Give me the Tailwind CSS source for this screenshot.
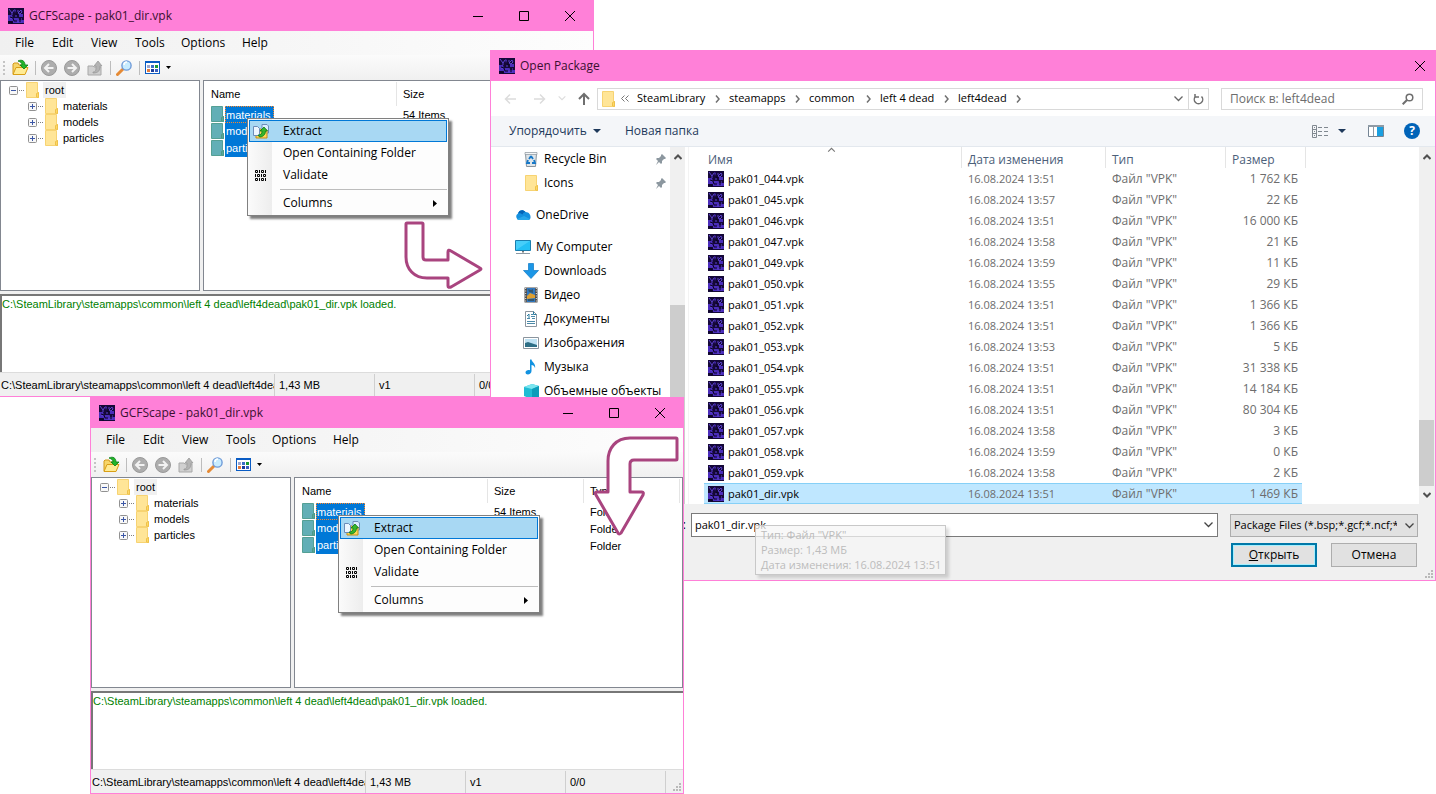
<!DOCTYPE html>
<html lang="ru">
<head>
    <meta charset="UTF-8" />
    <meta name="viewport" content="width=device-width, initial-scale=1" />
    <title>GCFScape - pak01_dir.vpk</title>
    <script src="https://cdn.jsdelivr.net/npm/@tailwindcss/browser@4"></script>
</head>
<body class="bg-white text-black text-xs font-['Open_Sans','Noto_Sans',sans-serif]">
    <!-- Shared icons -->
    <svg class="hidden" aria-hidden="true">
        <symbol id="i-app" viewBox="0 0 16 16">
            <rect width="16" height="16" fill="#150838" />
            <path d="M0 7h4l1 3h5l1 2h5v3H5v-2H0zM6 1l2 1-1 3zM11 6h4v3h-4z" fill="#4a2cba" />
            <path d="M1 1l3 4 2-3M4 5v2M9 3h2M13 2l1 2-2 2-2-1zM7 8h2M2 10l2 1M10 11h1M13 11h1M9 14h2M13 14h1" fill="none" stroke="#5c43cf" />
            <path d="M2 9l3 1 1 3h3M12 12v2M8 6l2 1M0 14h4v2" fill="none" stroke="#0a0320" />
        </symbol>
        <symbol id="i-folder" viewBox="0 0 13 16">
            <path d="M.5.5h11v10h1v5H.5z" fill="#ffe597" stroke="#f7d372" />
            <path d="M10.500 15V11.500l2-1v5z" fill="#ffd968" stroke="#eec14a" />
        </symbol>
        <symbol id="i-folder-sel" viewBox="0 0 13 16">
            <path d="M.5.5h11v10h1v5H.5z" fill="#62afb6" stroke="#54a094" />
            <path d="M10.500 15V11.500l2-1v5z" fill="#5aa79c" stroke="#4d9a86" />
        </symbol>
        <symbol id="i-min" viewBox="0 0 10 10"><path d="M0 5.500h10" stroke="#000" /></symbol>
        <symbol id="i-max" viewBox="0 0 10 10"><path d="M.5.5h9v9h-9z" fill="none" stroke="#000" /></symbol>
        <symbol id="i-close" viewBox="0 0 10 10"><path d="M0 0l10 10M10 0L0 10" stroke="#000" /></symbol>
        <symbol id="i-open" viewBox="0 0 17 17">
            <path d="M1 5l1-1h4l1 2h6v9H1z" fill="#f7d66a" stroke="#d39a1c" />
            <path d="M1 15.500l3-7h12l-3 7z" fill="#ffeb94" stroke="#d99f16" />
            <path d="M6 2c4-2 7 0 7 4h3l-4 4-4-4h2c0-2-1-3-4-4z" fill="#22b52a" stroke="#087d14" stroke-width=".8" />
        </symbol>
        <symbol id="i-back" viewBox="0 0 16 16">
            <circle cx="8" cy="8" r="7.500" fill="#adadad" stroke="#999" />
            <path d="M12.500 8H4.500M8 4L4 8l4 4" fill="none" stroke="#f2f2f2" stroke-width="2" />
        </symbol>
        <symbol id="i-fwd" viewBox="0 0 16 16">
            <circle cx="8" cy="8" r="7.500" fill="#adadad" stroke="#999" />
            <path d="M3.500 8h8M8 4l4 4-4 4" fill="none" stroke="#f2f2f2" stroke-width="2" />
        </symbol>
        <symbol id="i-up" viewBox="0 0 16 16">
            <path d="M1 6h5l1 1h7v8H1z" fill="#d0d0d0" stroke="#a8a8a8" />
            <path d="M6 12c3 0 3-2 3-6H7l4-5 4 5h-2c0 5-2 7-7 7z" fill="#b4b4b4" stroke="#999" stroke-width=".8" />
        </symbol>
        <symbol id="i-find" viewBox="0 0 16 16">
            <path d="M1.500 14.500l5-5" stroke="#e58a35" stroke-width="3" stroke-linecap="round" />
            <circle cx="10.500" cy="5.500" r="4.600" fill="#c8ecff" stroke="#6f9bd8" stroke-width="1.400" />
            <path d="M8 5c0-2 1-3 3-3" fill="none" stroke="#fff" stroke-width="1.500" />
        </symbol>
        <symbol id="i-view" viewBox="0 0 15 13">
            <rect x=".5" y=".5" width="14" height="12" fill="#fff" stroke="#0a5cc4" />
            <rect width="15" height="2" fill="#0a5cc4" />
            <path d="M2 4h3v3H2z" fill="#9aa5cf" /><path d="M6 4h3v3H6z" fill="#3c6fc8" /><path d="M10 4h3v3h-3z" fill="#199a34" />
            <path d="M2 8h3v3H2z" fill="#e47a3c" /><path d="M6 8h3v3H6z" fill="#183c9c" /><path d="M10 8h3v3h-3z" fill="#3a5fc0" />
        </symbol>
        <symbol id="i-extract" viewBox="0 0 16 15">
            <path d="M9 .5h5l1.500 1.500v7H9z" fill="#dceeff" stroke="#6c8cb8" />
            <path d="M3 5h5l1 1h5v8H3z" fill="#ffd85a" stroke="#c58c12" />
            <path d="M.5 2.500h4l2 2v7h-6z" fill="#eef6ff" stroke="#6c8cb8" />
            <path d="M5 11c3 0 4-1 4-4H7l4-4 3.500 4h-2c0 4-3 6-6 6z" fill="#35b52c" stroke="#0b7a14" stroke-width=".8" />
        </symbol>
        <symbol id="i-validate" viewBox="0 0 12 11">
            <path d="M.5.5h2v2h-2zM4.500 0v3M6.500.5h2v2h-2zM10.500 0v3M.5 4v3M2.500 4.500h2v2h-2zM6.500 4v3M8.500 4.500h2v2h-2zM.5 8.500h2v2h-2zM4.500 8v3M6.500 8.500h2v2h-2zM10.500 8v3" fill="none" stroke="#000" />
        </symbol>
        <symbol id="i-plus" viewBox="0 0 9 9">
            <rect x=".5" y=".5" width="8" height="8" rx="1" fill="#f8f8f8" stroke="#919191" />
            <path d="M2 4.500h5M4.500 2v5" stroke="#3c57a6" />
        </symbol>
        <symbol id="i-minus" viewBox="0 0 9 9">
            <rect x=".5" y=".5" width="8" height="8" rx="1" fill="#f8f8f8" stroke="#919191" />
            <path d="M2 4.500h5" stroke="#3c57a6" />
        </symbol>
        <symbol id="i-grip" viewBox="0 0 8 8">
            <path d="M6 0h2v2H6zM3 3h2v2H3zM6 3h2v2H6zM0 6h2v2H0zM3 6h2v2H3zM6 6h2v2H6z" fill="#b9b9b9" />
        </symbol>
        <symbol id="i-chev-r" viewBox="0 0 5 8"><path d="M1 .5L4 4 1 7.500" fill="none" stroke="#707070" stroke-width="1.500" /></symbol>
        <symbol id="i-chev-d" viewBox="0 0 9 6"><path d="M.5.5l4 4 4-4" fill="none" stroke="currentColor" stroke-width="1.300" /></symbol>
        <symbol id="i-sb-up" viewBox="0 0 8 6"><path d="M.5 5L4 1.500 7.500 5" fill="none" stroke="#505050" stroke-width="2" /></symbol>
        <symbol id="i-sb-down" viewBox="0 0 8 6"><path d="M.5 1L4 4.500 7.500 1" fill="none" stroke="#505050" stroke-width="2" /></symbol>
        <symbol id="i-pin" viewBox="0 0 10 11"><path d="M6 0l4 4-1 1H8L6 7v2L5 10 3 8l-3 3 2-4-2-2 1-1h2l2-2V1z" fill="#8c979f" /></symbol>
    </svg>

    <main class="relative min-h-screen overflow-hidden">
        <div id="window-back" class="absolute top-0 -left-px w-[595px]"></div>

        <!-- Open dialog -->
        <section class="absolute top-[50px] left-[490px] right-0 flex h-[531px] flex-col border border-[#ff80d8] bg-white" aria-label="Open Package">
            <header class="flex h-[30px] shrink-0 items-center bg-[#ff80d8] pl-2">
                <svg class="size-4"><use href="#i-app" /></svg>
                <h2 class="ml-[5px] text-[#3a1030]">Open Package</h2>
                <button class="ml-auto flex h-full w-[30px] items-center justify-center" aria-label="Закрыть"><svg class="size-[10px]"><use href="#i-close" /></svg></button>
            </header>

            <div class="flex h-[35px] shrink-0 items-center pr-3">
                <div class="flex w-[106px] items-center">
                    <button class="ml-[13px] w-[15px]" aria-label="Назад"><svg class="h-3 w-[13px]" viewBox="0 0 13 12"><path d="M12 6H1.500M6 1.500L1.500 6 6 10.500" fill="none" stroke="#dcdcdc" stroke-width="1.500" /></svg></button>
                    <button class="ml-[14px] w-[13px]" aria-label="Вперёд"><svg class="h-3 w-[13px]" viewBox="0 0 13 12"><path d="M1 6h10.500M7 1.500L11.500 6 7 10.500" fill="none" stroke="#dcdcdc" stroke-width="1.500" /></svg></button>
                    <button class="ml-3 text-[#dcdcdc]" aria-label="Последние расположения"><svg class="h-[5px] w-2"><use href="#i-chev-d" /></svg></button>
                    <button class="ml-3" aria-label="Вверх"><svg class="h-[13px] w-3" viewBox="0 0 12 13"><path d="M6 13V2M1 7l5-5 5 5" fill="none" stroke="#6f6f6f" stroke-width="2" /></svg></button>
                </div>
                <nav class="flex h-[22px] flex-1 items-center border border-[#d9d9d9] pl-1 text-[11px]" aria-label="Путь">
                    <svg class="h-4 w-[13px]"><use href="#i-folder" /></svg>
                    <svg class="ml-[6px] h-[7px] w-2" viewBox="0 0 8 7"><path d="M3.500.5l-3 3 3 3M7.500.5l-3 3 3 3" fill="none" stroke="#777" /></svg>
                    <a href="#" class="ml-2 w-[78px]">SteamLibrary</a><svg class="h-2 w-[5px]"><use href="#i-chev-r" /></svg>
                    <a href="#" class="ml-[9px] w-[66px]">steamapps</a><svg class="h-2 w-[5px]"><use href="#i-chev-r" /></svg>
                    <a href="#" class="ml-[9px] w-[57px]">common</a><svg class="h-2 w-[5px]"><use href="#i-chev-r" /></svg>
                    <a href="#" class="ml-[9px] w-16 whitespace-nowrap">left 4 dead</a><svg class="h-2 w-[5px]"><use href="#i-chev-r" /></svg>
                    <a href="#" class="ml-[9px] w-[58px]">left4dead</a><svg class="h-2 w-[5px]"><use href="#i-chev-r" /></svg>
                    <button class="ml-auto flex h-full w-5 items-center justify-center text-[#666]" aria-label="Предыдущие расположения"><svg class="h-[6px] w-[9px]"><use href="#i-chev-d" /></svg></button>
                    <button class="flex h-full w-5 items-center justify-center border-l border-[#d9d9d9]" aria-label="Обновить">
                        <svg class="h-3 w-[11px]" viewBox="0 0 11 12"><path d="M2.500 3.500a4.200 4.200 0 1 0 6 0M2 1v3h4" fill="none" stroke="#6f6f6f" stroke-width="1.500" /></svg>
                    </button>
                </nav>
                <div class="ml-3 flex h-[22px] w-[202px] items-center border border-[#d9d9d9] px-2">
                    <input type="search" class="min-w-0 flex-1 outline-none placeholder:text-[#6d6d6d]" placeholder="Поиск в: left4dead" aria-label="Поиск" />
                    <svg class="size-3" viewBox="0 0 12 12"><circle cx="7.500" cy="4.500" r="3.300" fill="none" stroke="#6f6f6f" stroke-width="1.500" /><path d="M5 7L.7 11.300" stroke="#6f6f6f" stroke-width="2" /></svg>
                </div>
            </div>

            <div class="flex h-[31px] shrink-0 items-center border-b border-[#e3e8ee] bg-[#f4f6f9] pr-[15px] pl-[18px] text-[#1e395b]">
                <button class="flex w-[116px] items-center gap-[6px]">Упорядочить <svg class="h-1 w-2" viewBox="0 0 8 4"><path d="M0 0h8L4 4z" fill="#1e395b" /></svg></button>
                <button>Новая папка</button>
                <button class="ml-auto flex items-center gap-[10px]" aria-label="Вид">
                    <svg class="h-[13px] w-4" viewBox="0 0 16 13"><path d="M.5.5h4v12h-4zM.5 4.500h4M.5 8.500h4M2 2.500h1M2 6.500h1M2 10.500h1M6 2.500h4M12 2.500h4M6 6.500h4M12 6.500h4M6 10.500h4M12 10.500h4" fill="none" stroke="#808890" /></svg>
                    <svg class="h-1 w-2" viewBox="0 0 8 4"><path d="M0 0h8L4 4z" fill="#1e395b" /></svg>
                </button>
                <button class="ml-[22px]" aria-label="Область просмотра">
                    <svg class="h-3 w-4" viewBox="0 0 16 12"><path d="M.5.5h15v11H.5z" fill="#fff" stroke="#748494" /><path d="M0 0h16v2H0zM5 1h1v10H5z" fill="#8f9ba6" /><path d="M9 2h6v9H9z" fill="#1a9fe0" /></svg>
                </button>
                <button class="ml-5 flex size-4 items-center justify-center rounded-full bg-[#0063b8] text-xs font-bold text-white" aria-label="Справка">?</button>
            </div>

            <div class="flex h-[357px] shrink-0">
                <ul class="flex w-[179px] flex-col overflow-hidden whitespace-nowrap">
                    <li class="flex h-6 shrink-0 items-center pl-8">
                        <svg class="mr-[5px] size-4" viewBox="0 0 16 16"><path d="M2.500 2.500h11l-1 13h-9z" fill="#dfe5e9" stroke="#8a949c" /><path d="M2 1.500h12v2H2z" fill="#f4f6f7" stroke="#8a949c" stroke-width=".7" /><path d="M8 5l2 3M11 9l1 3H9M7 12H4l1-3M6 8l2-3" fill="none" stroke="#1678c8" stroke-width="1.800" /></svg>
                        Recycle Bin <svg class="ml-auto mr-1 h-[11px] w-[10px]"><use href="#i-pin" /></svg>
                    </li>
                    <li class="mb-2 flex h-6 shrink-0 items-center pl-[34px]">
                        <svg class="mr-[6px] h-4 w-[13px]"><use href="#i-folder" /></svg>
                        Icons <svg class="ml-auto mr-1 h-[11px] w-[10px]"><use href="#i-pin" /></svg>
                    </li>
                    <li class="mb-2 flex h-6 shrink-0 items-center pl-6">
                        <svg class="mr-[5px] size-4" viewBox="0 0 16 16"><path d="M4 13a3.500 3.500 0 0 1-1-6.500C4 3 8 2 10.500 5 14 5 16 8 15.500 11c-.5 1.500-1.500 2-2.500 2z" fill="#1490df" /><path d="M3 6.500C4 3 8 2 10.500 5 9 5 8 6 7.500 7.500 6 6.500 5 6 3 6.500z" fill="#0364b8" /><path d="M2 12l7-3 6 3c-.5.7-1.200 1-2 1H4c-.8 0-1.500-.4-2-1z" fill="#28a8ea" /></svg>
                        OneDrive
                    </li>
                    <li class="flex h-6 shrink-0 items-center pl-6">
                        <svg class="mr-[5px] size-4" viewBox="0 0 16 16"><path d="M.5 1.500h15v10H.5z" fill="#23c0f5" stroke="#1b7eae" /><path d="M1 2h14L1 11z" fill="#6adcff" opacity=".5" /><path d="M7 12h2v1.500H7z" fill="#777" /><path d="M1 14.500h14" stroke="#8d9aa5" /></svg>
                        My Computer
                    </li>
                    <li class="flex h-6 shrink-0 items-center pl-8">
                        <svg class="mr-[5px] size-4" viewBox="0 0 16 16"><path d="M5.500.5h5v7h5L8 15.500.5 7.500h5z" fill="#1b96e6" stroke="#0b78c6" stroke-width=".7" /></svg>
                        Downloads
                    </li>
                    <li class="flex h-6 shrink-0 items-center pl-8">
                        <svg class="mr-[5px] size-4" viewBox="0 0 16 16"><path d="M1.500.5h13v15h-13z" fill="#4c4c4c" /><path d="M4 1h8v14H4z" fill="#2f78c0" /><path d="M4 9l3-3 5 2v3l-8 1z" fill="#e0a030" /><path d="M5 2l3 1 2-1v4L6 5zM5 12h6v2H5z" fill="#34566e" /><path d="M2.700 1v15M13.300 1v15" stroke="#eee" stroke-dasharray="1 1.500" /></svg>
                        Видео
                    </li>
                    <li class="flex h-6 shrink-0 items-center pl-8">
                        <svg class="mr-[5px] size-4" viewBox="0 0 16 16"><path d="M2.500.5h8l3 3v12h-11z" fill="#fff" stroke="#8b959e" /><path d="M8 3.500h2M8 5.500h4M4 7.500h3M9 7.500h3M4 10.500h8M4 12.500h8" stroke="#4b89a8" /><path d="M4 5l2-2v4M10.500.5v3h3" fill="none" stroke="#2b7da0" /></svg>
                        Документы
                    </li>
                    <li class="flex h-6 shrink-0 items-center pl-8">
                        <svg class="mr-[5px] size-4" viewBox="0 0 16 16"><path d="M.5 2.500h15v11H.5z" fill="#fff" stroke="#8b959e" /><path d="M2 4h12v8H2z" fill="#bfe2f3" /><path d="M2 8l3-1 9 3v2H2z" fill="#2e6f86" /></svg>
                        Изображения
                    </li>
                    <li class="flex h-6 shrink-0 items-center pl-8">
                        <svg class="mr-[5px] size-4" viewBox="0 0 16 16"><path d="M7 .5h1.500c.5 3 4.500 4 3.500 8.500-.5-2-2-3-3.500-3V12c0 4-6 4.500-6 1.500 0-2 2.500-3 4.500-2.200z" fill="#1292e0" /></svg>
                        Музыка
                    </li>
                    <li class="flex h-6 shrink-0 items-center pl-8">
                        <svg class="mr-[5px] size-4" viewBox="0 0 16 16"><path d="M1 4l8-3 7 2v11l-8 2-7-3z" fill="#20bcd4" /><path d="M1 4l8-3 7 2-7 3z" fill="#7be5ef" /><path d="M9 6l7-3v11l-7 2z" fill="#0c9cba" /></svg>
                        Объемные объекты
                    </li>
                </ul>
                <div class="flex w-[15px] flex-col items-center bg-[#f0f0f0]">
                    <svg class="mt-[7px] mb-[145px] h-[6px] w-2 shrink-0"><use href="#i-sb-up" /></svg>
                    <div class="w-full flex-1 bg-[#cdcdcd]"></div>
                </div>
                <div class="ml-[3px] min-w-0 flex-1 overflow-hidden border-l border-[#f3f3f3] pl-[15px]">
                    <table class="w-[602px] table-fixed border-separate border-spacing-0 text-left text-[#6d6d6d]">
                        <colgroup><col class="w-[258px]" /><col class="w-36" /><col class="w-[120px]" /><col class="w-[76px]" /><col class="w-1" /></colgroup>
                        <thead class="text-[#4c607a]">
                            <tr class="h-[21px]">
                                <th class="relative border-r border-[#e5e5e5] p-0 pt-1 pl-1 font-normal">
                                    Имя
                                    <svg class="absolute top-0 left-[123px] h-[5px] w-[9px] rotate-180 text-[#777]"><use href="#i-chev-d" /></svg>
                                </th>
                                <th class="border-r border-[#e5e5e5] p-0 pt-1 pl-[6px] font-normal">Дата изменения</th>
                                <th class="border-r border-[#e5e5e5] p-0 pt-1 pl-[6px] font-normal">Тип</th>
                                <th class="p-0 pt-1 pl-[6px] font-normal">Размер</th>
                                <th class="border-r border-[#e5e5e5] p-0"></th>
                            </tr>
                        </thead>
                        <tbody id="files"></tbody>
                    </table>
                </div>
                <div class="flex w-[15px] flex-col items-center bg-[#f0f0f0]">
                    <svg class="mt-[7px] mb-auto h-[6px] w-2 shrink-0"><use href="#i-sb-up" /></svg>
                    <div class="h-[66px] w-full bg-[#cdcdcd]"></div>
                    <svg class="my-[6px] h-[6px] w-2 shrink-0"><use href="#i-sb-down" /></svg>
                </div>
                <div class="w-px bg-[#f0f0f0]"></div>
            </div>

            <footer class="relative flex flex-1 flex-col bg-[#f0f0f0] pt-[9px] pr-[17px]">
                <div class="flex items-center">
                    <label for="file-name" class="w-[195px] text-right">Имя файла:</label>
                    <div class="ml-[5px] flex h-6 flex-1 items-center border border-[#7a7a7a] bg-white pl-[3px] pr-1">
                        <input id="file-name" type="text" class="min-w-0 flex-1 text-[11px] outline-none" value="pak01_dir.vpk" />
                        <button class="text-[#444]" aria-label="Показать список"><svg class="h-[6px] w-[9px]"><use href="#i-chev-d" /></svg></button>
                    </div>
                    <div class="relative ml-3 w-[188px]">
                        <select class="block h-[23px] w-full appearance-none overflow-hidden border border-[#adadad] bg-[#e1e1e1] pr-5 pl-[3px] text-[11px]" aria-label="Тип файлов">
                            <option>Package Files (*.bsp;*.gcf;*.ncf;*.vpk)</option>
                        </select>
                        <svg class="pointer-events-none absolute top-[9px] right-1 h-[6px] w-[9px] text-[#444]"><use href="#i-chev-d" /></svg>
                    </div>
                </div>
                <div class="mt-[6px] flex justify-end gap-[14px]">
                    <button class="h-6 w-[86px] border-2 border-[#0078a8] bg-[#e1e1e1] outline-1 -outline-offset-3 outline-[#a4f0ff]"><u>О</u>ткрыть</button>
                    <button class="mr-px h-6 w-[86px] border border-[#adadad] bg-[#e1e1e1]">Отмена</button>
                </div>
                <svg class="absolute right-[2px] bottom-[2px] size-2"><use href="#i-grip" /></svg>
                <div role="tooltip" class="absolute top-[21px] left-[264px] h-[50px] w-[191px] border border-[#c8c8c8] bg-[#f6f6f6]/75 pl-[5px] text-[11px] leading-[15px] whitespace-nowrap text-[#bcbcbc] shadow-[3px_3px_3px_#00000026]">
                    <p class="mt-px">Тип: Файл "VPK"</p>
                    <p>Размер: 1,43 МБ</p>
                    <p>Дата изменения: 16.08.2024 13:51</p>
                </div>
            </footer>
        </section>

        <div id="window-front" class="absolute top-[397px] left-[90px] w-[594px]"></div>

        <!-- Step arrows -->
        <svg class="pointer-events-none absolute top-[220px] left-[403px] h-[70px] w-20" viewBox="0 0 80 70">
            <path d="M4 3h15q1 0 1 1v33q0 3 3 3h22v-8q0-3 3-1l29 17q2 1 0 2L48 67q-3 1-3-1v-8H24C11 58 3 49 3 37V4q0-1 1-1z" fill="#fff" stroke="#a9447f" stroke-width="3" stroke-linejoin="round" />
        </svg>
        <svg class="pointer-events-none absolute top-[435px] left-[592px] h-[102px] w-[88px]" viewBox="0 0 88 102">
            <path d="M84 3H38C24 3 16 13 16 26v31H5q-3 0-1 3l22 38q1 2 3 0l22-38q1-3-1-3H38V29q0-4 4-4h42q1 0 1-1V4q0-1-1-1z" fill="#fff" stroke="#a9447f" stroke-width="3" stroke-linejoin="round" />
        </svg>
    </main>

    <!-- GCFScape window, shown twice -->
    <template id="gcfscape">
        <section class="flex h-[397px] flex-col border border-[#ff80d8] bg-[#f0f0f0]">
            <header class="flex h-[30px] shrink-0 items-center bg-[#ff80d8] pl-2">
                <svg class="size-4"><use href="#i-app" /></svg>
                <h2 class="ml-[5px] text-[#3a1030]">GCFScape - pak01_dir.vpk</h2>
                <div class="ml-auto flex h-full">
                    <button class="flex w-[46px] items-center justify-center" aria-label="Minimize"><svg class="size-[10px]"><use href="#i-min" /></svg></button>
                    <button class="flex w-[45px] items-center justify-center" aria-label="Maximize"><svg class="size-[10px]"><use href="#i-max" /></svg></button>
                    <button class="flex w-[47px] items-center justify-center" aria-label="Close"><svg class="size-[10px]"><use href="#i-close" /></svg></button>
                </div>
            </header>

            <nav class="flex h-6 shrink-0 items-center bg-linear-to-r from-[#f0f0f0] to-[#fdfdfd] pl-[15px] text-left">
                <button class="w-[37px] text-left">File</button>
                <button class="w-[39px] text-left">Edit</button>
                <button class="w-11 text-left">View</button>
                <button class="w-[46px] text-left">Tools</button>
                <button class="w-[61px] text-left">Options</button>
                <button class="text-left">Help</button>
            </nav>

            <div class="flex h-[25px] shrink-0 items-center bg-linear-to-b from-[#fbfbfb] to-[#f0f0f0] pl-[3px]">
                <svg class="h-[14px] w-[2px]" viewBox="0 0 2 14"><path d="M0 0h2v2H0zM0 4h2v2H0zM0 8h2v2H0zM0 12h2v2H0z" fill="#c4c4c4" /></svg>
                <button class="ml-[7px]" aria-label="Open"><svg class="size-[17px]"><use href="#i-open" /></svg></button>
                <div class="ml-[6px] h-[14px] w-px bg-[#bdbdbd]"></div>
                <button class="ml-[5px]" aria-label="Back"><svg class="size-4"><use href="#i-back" /></svg></button>
                <button class="ml-[7px]" aria-label="Forward"><svg class="size-4"><use href="#i-fwd" /></svg></button>
                <button class="ml-[7px]" aria-label="Up"><svg class="size-4"><use href="#i-up" /></svg></button>
                <div class="ml-[7px] h-[14px] w-px bg-[#bdbdbd]"></div>
                <button class="ml-[5px]" aria-label="Find"><svg class="size-4"><use href="#i-find" /></svg></button>
                <div class="ml-[7px] h-[14px] w-px bg-[#bdbdbd]"></div>
                <button class="ml-[5px] flex items-center gap-[6px]" aria-label="View">
                    <svg class="h-[13px] w-[15px]"><use href="#i-view" /></svg>
                    <svg class="h-[3px] w-[5px]" viewBox="0 0 5 3"><path d="M0 0h5L2.500 3z" /></svg>
                </button>
            </div>

            <div class="relative flex h-[211px] shrink-0 gap-[3px] font-['Liberation_Sans',sans-serif] text-[11px]">
                <ul class="w-[200px] border border-[#828790] bg-white pt-px leading-4">
                    <li class="flex items-center pl-2">
                        <svg class="size-[9px]"><use href="#i-minus" /></svg>
                        <span class="mr-[2px] ml-px w-[5px] border-t border-dotted border-[#808080]"></span>
                        <svg class="h-4 w-[13px]"><use href="#i-folder" /></svg>
                        <span class="ml-[4px] bg-[#f0f0f0] px-[2px]">root</span>
                    </li>
                    <li class="flex items-center pl-[27px]">
                        <svg class="size-[9px]"><use href="#i-plus" /></svg>
                        <span class="mr-[2px] ml-px w-[5px] border-t border-dotted border-[#808080]"></span>
                        <svg class="h-4 w-[13px]"><use href="#i-folder" /></svg>
                        <span class="ml-[5px]">materials</span>
                    </li>
                    <li class="flex items-center pl-[27px]">
                        <svg class="size-[9px]"><use href="#i-plus" /></svg>
                        <span class="mr-[2px] ml-px w-[5px] border-t border-dotted border-[#808080]"></span>
                        <svg class="h-4 w-[13px]"><use href="#i-folder" /></svg>
                        <span class="ml-[5px]">models</span>
                    </li>
                    <li class="flex items-center pl-[27px]">
                        <svg class="size-[9px]"><use href="#i-plus" /></svg>
                        <span class="mr-[2px] ml-px w-[5px] border-t border-dotted border-[#808080]"></span>
                        <svg class="h-4 w-[13px]"><use href="#i-folder" /></svg>
                        <span class="ml-[5px]">particles</span>
                    </li>
                </ul>
                <div class="flex-1 border border-[#828790] bg-white pt-px">
                    <table class="w-[385px] table-fixed border-separate border-spacing-0 text-left leading-4">
                        <colgroup><col class="w-[193px]" /><col class="w-24" /><col class="w-24" /></colgroup>
                        <thead>
                            <tr class="h-6">
                                <th class="border-r border-[#e5e5e5] p-0 pl-[7px] font-normal">Name</th>
                                <th class="border-r border-[#e5e5e5] p-0 pl-[6px] font-normal">Size</th>
                                <th class="border-r border-[#e5e5e5] p-0 pl-[6px] font-normal">Type</th>
                            </tr>
                        </thead>
                        <tbody>
                            <tr class="h-[17px]">
                                <td class="p-0 pl-[7px]"><div class="flex"><svg class="mr-px h-4 w-[13px]"><use href="#i-folder-sel" /></svg><span class="h-[17px] w-[49px] border border-dotted border-[#ff8728] bg-[#0078d7] text-white">materials</span></div></td>
                                <td class="p-0 pl-[6px]">54 Items</td>
                                <td class="p-0 pl-[6px]">Folder</td>
                            </tr>
                            <tr class="h-[17px]">
                                <td class="p-0 pl-[7px]"><div class="flex"><svg class="mr-px h-4 w-[13px]"><use href="#i-folder-sel" /></svg><span class="h-[17px] bg-[#0078d7] px-px text-white">models</span></div></td>
                                <td class="p-0"></td>
                                <td class="p-0 pl-[6px]">Folder</td>
                            </tr>
                            <tr class="h-[17px]">
                                <td class="p-0 pl-[7px]"><div class="flex"><svg class="mr-px h-4 w-[13px]"><use href="#i-folder-sel" /></svg><span class="h-[17px] bg-[#0078d7] px-px text-white">particles</span></div></td>
                                <td class="p-0"></td>
                                <td class="p-0 pl-[6px]">Folder</td>
                            </tr>
                        </tbody>
                    </table>
                </div>

                <!-- Context menu -->
                <div role="menu" class="absolute top-[38px] left-[247px] w-[202px] border border-[#808080] bg-[#fdfdfd] bg-linear-to-r from-[#fbfbfb] from-0% via-[#ededed] via-12% to-[#fdfdfd] to-12% p-px font-['Open_Sans','Noto_Sans',sans-serif] text-xs shadow-[3px_3px_2px_#00000080]">
                    <button role="menuitem" class="flex h-[22px] w-full items-center border border-[#0078d7] bg-[#a8d8f3] pl-[3px]">
                        <svg class="mr-[14px] h-[15px] w-4"><use href="#i-extract" /></svg>Extract
                    </button>
                    <button role="menuitem" class="flex h-[22px] w-full items-center pl-[34px]">Open Containing Folder</button>
                    <button role="menuitem" class="flex h-[22px] w-full items-center pl-[6px]">
                        <svg class="mr-4 h-[11px] w-3"><use href="#i-validate" /></svg>Validate
                    </button>
                    <div class="mt-[3px] mb-[2px] ml-[31px] h-px bg-[#bdbdbd]"></div>
                    <button role="menuitem" class="flex h-[22px] w-full items-center pr-[10px] pl-[34px]">
                        Columns <svg class="ml-auto h-[7px] w-1" viewBox="0 0 4 7"><path d="M0 0l4 3.500L0 7z" /></svg>
                    </button>
                </div>
            </div>

            <div class="mt-[3px] h-[78px] shrink-0 border-t-2 border-l-2 border-[#777] bg-white font-['Liberation_Sans',sans-serif] text-[11px] leading-4 text-[#008000]">C:\SteamLibrary\steamapps\common\left 4 dead\left4dead\pak01_dir.vpk loaded.</div>

            <footer class="relative flex min-h-0 flex-1 items-center border-t border-[#dcdcdc] font-['Liberation_Sans',sans-serif] text-[11px] leading-[22px] whitespace-nowrap">
                <div class="w-[275px] overflow-hidden border-r border-[#cfcfcf] pl-px">C:\SteamLibrary\steamapps\common\left 4 dead\left4dea</div>
                <div class="w-[100px] border-r border-[#cfcfcf] pl-1">1,43 MB</div>
                <div class="w-[100px] border-r border-[#cfcfcf] pl-1">v1</div>
                <div class="w-[100px] border-r border-[#cfcfcf] pl-1">0/0</div>
                <svg class="absolute right-[2px] bottom-[2px] size-2"><use href="#i-grip" /></svg>
            </footer>
        </section>
    </template>

    <script>
        const files = [
            ['pak01_044.vpk', '13:51', '1 762 КБ'],
            ['pak01_045.vpk', '13:57', '22 КБ'],
            ['pak01_046.vpk', '13:51', '16 000 КБ'],
            ['pak01_047.vpk', '13:58', '21 КБ'],
            ['pak01_049.vpk', '13:59', '11 КБ'],
            ['pak01_050.vpk', '13:55', '29 КБ'],
            ['pak01_051.vpk', '13:51', '1 366 КБ'],
            ['pak01_052.vpk', '13:51', '1 366 КБ'],
            ['pak01_053.vpk', '13:53', '5 КБ'],
            ['pak01_054.vpk', '13:51', '31 338 КБ'],
            ['pak01_055.vpk', '13:51', '14 184 КБ'],
            ['pak01_056.vpk', '13:51', '80 304 КБ'],
            ['pak01_057.vpk', '13:58', '3 КБ'],
            ['pak01_058.vpk', '13:59', '0 КБ'],
            ['pak01_059.vpk', '13:58', '2 КБ'],
            ['pak01_dir.vpk', '13:51', '1 469 КБ'],
        ];

        document.getElementById('files').innerHTML = files.map(([name, time, size]) => {
            const selected = name === 'pak01_dir.vpk';
            const cell = selected ? 'border-y border-[#86d0f7] bg-[#bfe7ff]' : '';
            return `<tr class="h-[21px] leading-4">
                <td class="p-0 pl-1 text-[11px] ${cell}"><div class="flex items-center gap-1 text-black"><svg class="size-4"><use href="#i-app" /></svg>${name}</div></td>
                <td class="p-0 pl-[6px] text-[11px] ${cell}">16.08.2024 ${time}</td>
                <td class="p-0 pl-[6px] ${cell}">Файл "VPK"</td>
                <td class="p-0 pr-1 text-right ${cell}">${size}</td>
                <td class="p-0"></td>
            </tr>`;
        }).join('');

        const tpl = document.getElementById('gcfscape');
        document.getElementById('window-back').appendChild(tpl.content.cloneNode(true));
        document.getElementById('window-front').appendChild(tpl.content.cloneNode(true));
    </script>
</body>
</html>
